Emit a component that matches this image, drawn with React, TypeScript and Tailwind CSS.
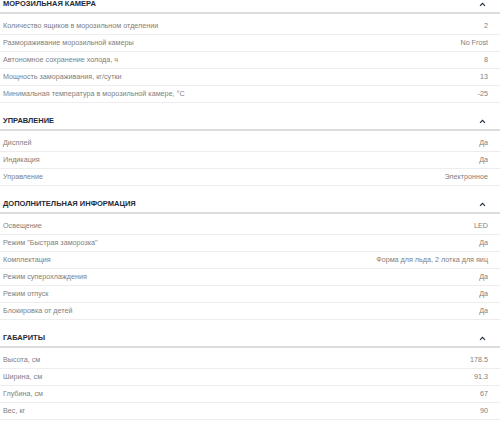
import { Fragment } from 'react';

type Row = [string, string];

interface Section {
  title: string;
  rows: Row[];
}

const sections: Section[] = [
  {
    title: 'Морозильная камера',
    rows: [
      ['Количество ящиков в морозильном отделении', '2'],
      ['Размораживание морозильной камеры', 'No Frost'],
      ['Автономное сохранение холода, ч', '8'],
      ['Мощность замораживания, кг/сутки', '13'],
      ['Минимальная температура в морозильной камере, °С', '-25'],
    ],
  },
  {
    title: 'Управление',
    rows: [
      ['Дисплей', 'Да'],
      ['Индикация', 'Да'],
      ['Управление', 'Электронное'],
    ],
  },
  {
    title: 'Дополнительная информация',
    rows: [
      ['Освещение', 'LED'],
      ['Режим "Быстрая заморозка"', 'Да'],
      ['Комплектация', 'Форма для льда, 2 лотка для яиц'],
      ['Режим суперохлаждения', 'Да'],
      ['Режим отпуск', 'Да'],
      ['Блокировка от детей', 'Да'],
    ],
  },
  {
    title: 'Габариты',
    rows: [
      ['Высота, см', '178.5'],
      ['Ширина, см', '91.3'],
      ['Глубина, см', '67'],
      ['Вес, кг', '90'],
    ],
  },
];

function Chevron() {
  return (
    <svg width="7" height="5" viewBox="0 0 7 5" fill="none" className="text-[#1e2a38] mb-[2px]">
      <path d="M1 3.8 L3.5 1.3 L6 3.8" stroke="currentColor" strokeWidth="1.1" />
    </svg>
  );
}

export default function App() {
  return (
    <div className="w-[500px] h-[422px] overflow-hidden bg-white font-['Liberation_Sans',sans-serif]">
      <div className="-mt-[14px]">
        {sections.map((s) => (
          <Fragment key={s.title}>
            <div className="h-[28px] flex items-end justify-between pl-[3px] pr-[14px] pb-[3px] border-b-2 border-[#dcdcdc]">
              <span className="text-[7.5px] font-bold uppercase text-[#1e2a38] leading-[10px]">{s.title}</span>
              <Chevron />
            </div>
            <div className="pt-[4px]">
              {s.rows.map(([label, value]) => (
                <div
                  key={label}
                  className="h-[17px] flex items-center justify-between pl-[3px] pr-[12px] border-b border-[#ededed] text-[7.2px] text-[#808080]"
                >
                  <span>{label}</span>
                  <span>{value}</span>
                </div>
              ))}
            </div>
          </Fragment>
        ))}
      </div>
    </div>
  );
}
